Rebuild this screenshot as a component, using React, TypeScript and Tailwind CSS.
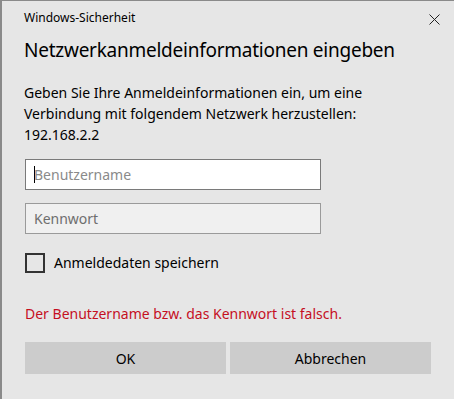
const App = () => {
  return (
    <div
      className="w-[454px] h-[399px] bg-[#e6e6e6] border-l-2 border-t border-[#8a8a8a] text-black overflow-hidden"
      style={{ fontFamily: '"Noto Sans", "Open Sans", sans-serif' }}
    >
      <div className="flex items-center justify-between pl-[22px] pr-[14px] pt-[9px]">
        <span className="text-[12px] leading-[16px]">Windows-Sicherheit</span>
        <svg width="11" height="11" viewBox="0 0 11 11" className="mt-[2px]">
          <path d="M0.5 0.5 L10.5 10.5 M10.5 0.5 L0.5 10.5" stroke="#222" strokeWidth="1" />
        </svg>
      </div>
      <h1 className="pl-[22px] mt-[10px] text-[19px] leading-[28px] font-normal tracking-[-0.25px]">
        Netzwerkanmeldeinformationen eingeben
      </h1>
      <p className="pl-[22px] mt-[18px] text-[14px] leading-[21px]">
        Geben Sie Ihre Anmeldeinformationen ein, um eine
        <br />
        Verbindung mit folgendem Netzwerk herzustellen:
        <br />
        192.168.2.2
      </p>
      <div className="pl-[23px] mt-[14px] flex flex-col gap-[13px]">
        <div className="w-[296px] h-[31px] bg-white border border-[#7a7a7a] flex items-center px-[8px]">
          <span className="w-px h-[17px] bg-black mr-[-1px]" />
          <span className="text-[14px] text-[#8a8a8a]">Benutzername</span>
        </div>
        <div className="w-[296px] h-[31px] bg-[#f0f0f0] border border-[#9a9a9a] flex items-center px-[8px]">
          <span className="text-[14px] text-[#6e6e6e]">Kennwort</span>
        </div>
      </div>
      <label className="pl-[23px] mt-[18px] flex items-center gap-[9px]">
        <span className="w-[20px] h-[20px] border-2 border-[#333] bg-[#e6e6e6]" />
        <span className="text-[14px]">Anmeldedaten speichern</span>
      </label>
      <p className="pl-[23px] mt-[31px] text-[14px] leading-[20px] text-[#c50f1f]">
        Der Benutzername bzw. das Kennwort ist falsch.
      </p>
      <div className="pl-[23px] mt-[18px] flex gap-[4px]">
        <button className="w-[201px] h-[32px] bg-[#cccccc] text-[14px]">OK</button>
        <button className="w-[201px] h-[32px] bg-[#cccccc] text-[14px]">Abbrechen</button>
      </div>
    </div>
  );
};

export default App;
